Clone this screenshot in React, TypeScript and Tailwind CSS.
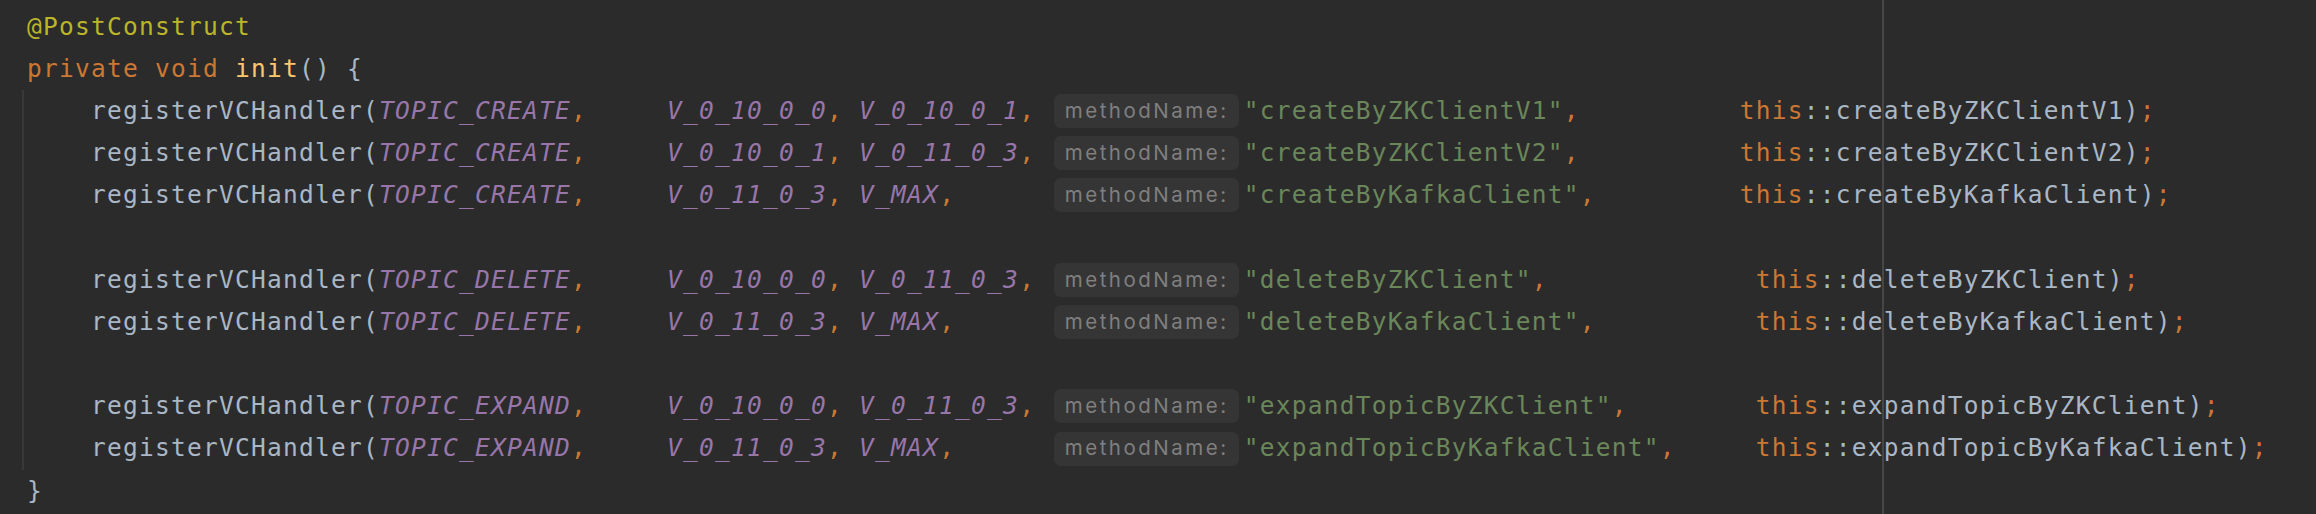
const txt = 'text-[#a9b7c6]'
const kw = 'text-[#cc7832]'
const ann = 'text-[#bbb529]'
const fn = 'text-[#ffc66d]'
const cst = 'text-[#9876aa] italic'
const str = 'text-[#6a8759]'

type Token = [string, string] | 'hint'
type Line = Token[]

const pad = (n: number) => ' '.repeat(n)

// "this" sits 31 columns after the string start on the create rows, 32 on the others
const register = (topic: string, from: string, to: string, name: string, col: number): Line => {
  const literal = `"${name}"`
  return [
    [txt, '    registerVCHandler('],
    [cst, topic],
    [kw, ','],
    [txt, pad(5)],
    [cst, from],
    [kw, ','],
    [txt, ' '],
    [cst, to],
    [kw, ','],
    [txt, pad(11 - to.length)],
    'hint',
    [str, literal],
    [kw, ','],
    [txt, pad(col - literal.length - 1)],
    [kw, 'this'],
    [txt, `::${name})`],
    [kw, ';'],
  ]
}

const body: Line[] = [
  register('TOPIC_CREATE', 'V_0_10_0_0', 'V_0_10_0_1', 'createByZKClientV1', 31),
  register('TOPIC_CREATE', 'V_0_10_0_1', 'V_0_11_0_3', 'createByZKClientV2', 31),
  register('TOPIC_CREATE', 'V_0_11_0_3', 'V_MAX', 'createByKafkaClient', 31),
  [],
  register('TOPIC_DELETE', 'V_0_10_0_0', 'V_0_11_0_3', 'deleteByZKClient', 32),
  register('TOPIC_DELETE', 'V_0_11_0_3', 'V_MAX', 'deleteByKafkaClient', 32),
  [],
  register('TOPIC_EXPAND', 'V_0_10_0_0', 'V_0_11_0_3', 'expandTopicByZKClient', 32),
  register('TOPIC_EXPAND', 'V_0_11_0_3', 'V_MAX', 'expandTopicByKafkaClient', 32),
]

const Hint = () => (
  <span className="ml-[3px] mr-[4.6px] inline-flex h-[34px] w-[185px] shrink-0 items-center justify-center rounded-[7px] bg-[#353535] font-['Inter',sans-serif] text-[20.5px] tracking-[2.5px] text-[#7f7f7f]">
    methodName:
  </span>
)

const CodeLine = ({ tokens }: { tokens: Line }) => (
  <div className="flex h-[42.2px] items-center whitespace-pre">
    {tokens.map((t, i) =>
      t === 'hint' ? (
        <Hint key={i} />
      ) : (
        <span key={i} className={t[0]}>
          {t[1]}
        </span>
      ),
    )}
  </div>
)

export default function App() {
  return (
    <div className="relative h-[514px] w-[2316px] overflow-hidden bg-[#2b2b2b]">
      <div className="pl-[27px] pt-[5.6px] font-['DejaVu_Sans_Mono',monospace] text-[24.5px] leading-[42.2px] tracking-[1.25px]">
        <CodeLine tokens={[[ann, '@PostConstruct']]} />
        <CodeLine
          tokens={[
            [kw, 'private'],
            [txt, ' '],
            [kw, 'void'],
            [txt, ' '],
            [fn, 'init'],
            [txt, '() {'],
          ]}
        />
        <div className="ml-[-5px] border-l-2 border-[#383838] pl-[3px]">
          {body.map((line, i) => (
            <CodeLine key={i} tokens={line} />
          ))}
        </div>
        <CodeLine tokens={[[txt, '}']]} />
      </div>
      <div className="absolute left-[1882px] top-0 h-full w-[2px] bg-[#464646]" />
    </div>
  )
}
